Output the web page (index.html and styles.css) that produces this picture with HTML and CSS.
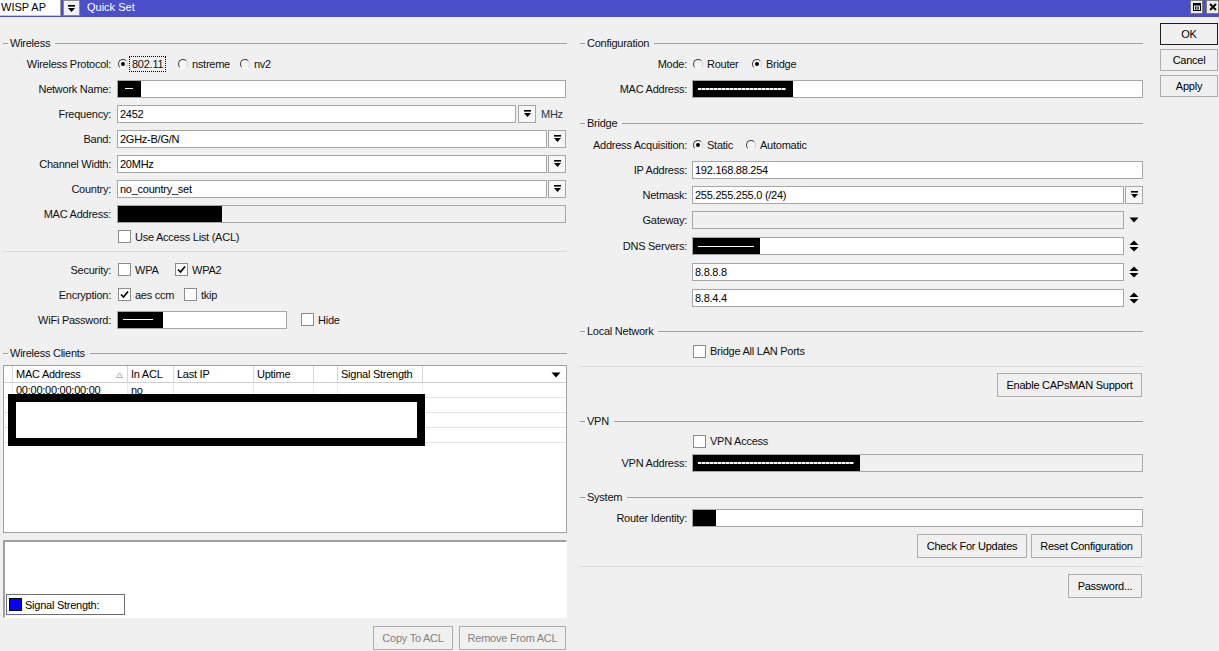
FILE: index.html
```html
<!DOCTYPE html>
<html>
<head>
<meta charset="utf-8">
<title>Quick Set</title>
<link rel="stylesheet" href="styles.css">
</head>
<body>
<div class="titlebar">
  <div class="preset">WISP AP</div>
  <div class="tb-dd"><svg width="9" height="9" viewBox="0 0 9 9"><rect x="1" y="1" width="7" height="1.6" fill="#000"/><path d="M1 4 H8 L4.5 8 Z" fill="#000"/></svg></div>
  <div class="title">Quick Set</div>
  <div class="spacer"></div>
  <div class="winbtn"><svg width="10" height="10" viewBox="0 0 10 10"><rect x="1.5" y="1.5" width="7" height="7" fill="none" stroke="#000"/><rect x="1.5" y="1.5" width="7" height="2" fill="#000"/><rect x="3.5" y="5" width="3" height="2" fill="none" stroke="#000" stroke-width="0.8"/></svg></div>
  <div class="winbtn close"><svg width="10" height="10" viewBox="0 0 10 10"><path d="M2 2 L8 8 M8 2 L2 8" stroke="#000" stroke-width="1.8"/></svg></div>
</div>

<div class="main">
  <!-- LEFT PANEL -->
  <div class="left">
    <div class="group"><span>Wireless</span></div>
    <div class="row first">
      <div class="lbl">Wireless Protocol:</div>
      <div class="opts">
        <div class="opt w60"><span class="rb on"></span><span class="focus">802.11</span></div>
        <div class="opt w62"><span class="rb"></span><span>nstreme</span></div>
        <div class="opt"><span class="rb"></span><span>nv2</span></div>
      </div>
    </div>
    <div class="row">
      <div class="lbl">Network Name:</div>
      <div class="field"><span class="redact w24"><span class="dash d8"></span></span></div>
    </div>
    <div class="row">
      <div class="lbl">Frequency:</div>
      <div class="field">2452</div>
      <div class="ddbtn gap2"><svg width="9" height="9" viewBox="0 0 9 9"><rect x="1" y="1" width="7" height="1.6" fill="#000"/><path d="M1 4 H8 L4.5 8 Z" fill="#000"/></svg></div>
      <div class="unit">MHz</div>
    </div>
    <div class="row">
      <div class="lbl">Band:</div>
      <div class="field">2GHz-B/G/N</div>
      <div class="ddbtn"><svg width="9" height="9" viewBox="0 0 9 9"><rect x="1" y="1" width="7" height="1.6" fill="#000"/><path d="M1 4 H8 L4.5 8 Z" fill="#000"/></svg></div>
    </div>
    <div class="row">
      <div class="lbl">Channel Width:</div>
      <div class="field">20MHz</div>
      <div class="ddbtn"><svg width="9" height="9" viewBox="0 0 9 9"><rect x="1" y="1" width="7" height="1.6" fill="#000"/><path d="M1 4 H8 L4.5 8 Z" fill="#000"/></svg></div>
    </div>
    <div class="row">
      <div class="lbl">Country:</div>
      <div class="field">no_country_set</div>
      <div class="ddbtn"><svg width="9" height="9" viewBox="0 0 9 9"><rect x="1" y="1" width="7" height="1.6" fill="#000"/><path d="M1 4 H8 L4.5 8 Z" fill="#000"/></svg></div>
    </div>
    <div class="row">
      <div class="lbl">MAC Address:</div>
      <div class="field dis"><span class="redact w105"></span></div>
    </div>
    <div class="row acl">
      <div class="lbl"></div>
      <div class="opts">
        <div class="opt"><span class="cb"></span><span>Use Access List (ACL)</span></div>
      </div>
    </div>
    <div class="sep s4"></div>
    <div class="row mt5">
      <div class="lbl">Security:</div>
      <div class="opts">
        <div class="opt w57"><span class="cb"></span><span>WPA</span></div>
        <div class="opt"><span class="cb on"><svg width="11" height="11" viewBox="0 0 11 11"><path d="M2 5.5 L4.5 8 L9 2.5" fill="none" stroke="#000" stroke-width="1.7"/></svg></span><span>WPA2</span></div>
      </div>
    </div>
    <div class="row">
      <div class="lbl">Encryption:</div>
      <div class="opts">
        <div class="opt w66"><span class="cb on"><svg width="11" height="11" viewBox="0 0 11 11"><path d="M2 5.5 L4.5 8 L9 2.5" fill="none" stroke="#000" stroke-width="1.7"/></svg></span><span>aes ccm</span></div>
        <div class="opt"><span class="cb"></span><span>tkip</span></div>
      </div>
    </div>
    <div class="row">
      <div class="lbl">WiFi Password:</div>
      <div class="field fixed170"><span class="redact w46"><span class="dash d30"></span></span></div>
      <div class="opts ml14">
        <div class="opt"><span class="cb"></span><span>Hide</span></div>
      </div>
    </div>

    <div class="group mt14"><span>Wireless Clients</span></div>
    <div class="table">
      <div class="trow thead">
        <div class="td"></div>
        <div class="td sorted">MAC Address<svg class="sort" width="7" height="6" viewBox="0 0 7 6"><path d="M0.5 5.5 L3.5 0.8 L6.5 5.5 Z" fill="none" stroke="#b0b0b0"/></svg></div>
        <div class="td">In ACL</div>
        <div class="td">Last IP</div>
        <div class="td">Uptime</div>
        <div class="td"></div>
        <div class="td">Signal Strength</div>
        <div class="td last"><svg class="hdd" width="10" height="6" viewBox="0 0 10 6"><path d="M0.5 0.5 H9.5 L5 5.5 Z" fill="#000"/></svg></div>
      </div>
      <div class="trow">
        <div class="td"></div>
        <div class="td">00:00:00:00:00:00</div>
        <div class="td">no</div>
        <div class="td"></div><div class="td"></div><div class="td"></div><div class="td"></div><div class="td last"></div>
      </div>
      <div class="trow">
        <div class="td"></div><div class="td"></div><div class="td"></div><div class="td"></div><div class="td"></div><div class="td"></div><div class="td"></div><div class="td last"></div>
      </div>
      <div class="trow">
        <div class="td"></div><div class="td"></div><div class="td"></div><div class="td"></div><div class="td"></div><div class="td"></div><div class="td"></div><div class="td last"></div>
      </div>
      <div class="trow">
        <div class="td"></div><div class="td"></div><div class="td"></div><div class="td"></div><div class="td"></div><div class="td"></div><div class="td"></div><div class="td last"></div>
      </div>
      <div class="table-redact"></div>
    </div>

    <div class="chart">
      <div class="legend"><span class="swatch"></span><span>Signal Strength:</span></div>
    </div>

    <div class="btnrow mt8">
      <div class="btn disabled w80">Copy To ACL</div>
      <div class="btn disabled w107">Remove From ACL</div>
    </div>
  </div>

  <!-- RIGHT PANEL -->
  <div class="right">
    <div class="group"><span>Configuration</span></div>
    <div class="row first">
      <div class="lbl">Mode:</div>
      <div class="opts">
        <div class="opt w59"><span class="rb"></span><span>Router</span></div>
        <div class="opt"><span class="rb on"></span><span>Bridge</span></div>
      </div>
    </div>
    <div class="row">
      <div class="lbl">MAC Address:</div>
      <div class="field"><span class="redact w101"><span class="dash dotted d88"></span></span></div>
    </div>

    <div class="group mt15"><span>Bridge</span></div>
    <div class="row mt2">
      <div class="lbl">Address Acquisition:</div>
      <div class="opts">
        <div class="opt w53"><span class="rb on"></span><span>Static</span></div>
        <div class="opt"><span class="rb"></span><span>Automatic</span></div>
      </div>
    </div>
    <div class="row">
      <div class="lbl">IP Address:</div>
      <div class="field">192.168.88.254</div>
    </div>
    <div class="row">
      <div class="lbl">Netmask:</div>
      <div class="field">255.255.255.0 (/24)</div>
      <div class="ddbtn"><svg width="9" height="9" viewBox="0 0 9 9"><rect x="1" y="1" width="7" height="1.6" fill="#000"/><path d="M1 4 H8 L4.5 8 Z" fill="#000"/></svg></div>
    </div>
    <div class="row tall">
      <div class="lbl">Gateway:</div>
      <div class="field dis"></div>
      <div class="arrowbox"><svg width="10" height="6" viewBox="0 0 10 6"><path d="M0.5 0.5 H9.5 L5 5.5 Z" fill="#000"/></svg></div>
    </div>
    <div class="row tall">
      <div class="lbl">DNS Servers:</div>
      <div class="field"><span class="redact w68"><span class="dash d56"></span></span></div>
      <div class="arrowbox"><svg width="10" height="12" viewBox="0 0 10 12"><path d="M0.5 5 H9.5 L5 0.5 Z M0.5 7 H9.5 L5 11.5 Z" fill="#000"/></svg></div>
    </div>
    <div class="row tall">
      <div class="lbl"></div>
      <div class="field">8.8.8.8</div>
      <div class="arrowbox"><svg width="10" height="12" viewBox="0 0 10 12"><path d="M0.5 5 H9.5 L5 0.5 Z M0.5 7 H9.5 L5 11.5 Z" fill="#000"/></svg></div>
    </div>
    <div class="row tall">
      <div class="lbl"></div>
      <div class="field">8.8.4.4</div>
      <div class="arrowbox"><svg width="10" height="12" viewBox="0 0 10 12"><path d="M0.5 5 H9.5 L5 0.5 Z M0.5 7 H9.5 L5 11.5 Z" fill="#000"/></svg></div>
    </div>

    <div class="group mt13"><span>Local Network</span></div>
    <div class="row short mt2">
      <div class="lbl"></div>
      <div class="opts">
        <div class="opt"><span class="cb"></span><span>Bridge All LAN Ports</span></div>
      </div>
    </div>
    <div class="sep s4"></div>
    <div class="btnrow mt6">
      <div class="btn w145">Enable CAPsMAN Support</div>
    </div>

    <div class="group mt17"><span>VPN</span></div>
    <div class="row short mt2">
      <div class="lbl"></div>
      <div class="opts">
        <div class="opt"><span class="cb"></span><span>VPN Access</span></div>
      </div>
    </div>
    <div class="row short">
      <div class="lbl">VPN Address:</div>
      <div class="field dis"><span class="redact w168"><span class="dash dotted d156"></span></span></div>
    </div>

    <div class="group mt16"><span>System</span></div>
    <div class="row mid mt2">
      <div class="lbl">Router Identity:</div>
      <div class="field"><span class="redact w24"></span></div>
    </div>
    <div class="btnrow mt4">
      <div class="btn w110">Check For Updates</div>
      <div class="btn w111">Reset Configuration</div>
    </div>
    <div class="sep s8"></div>
    <div class="btnrow mt7">
      <div class="btn w74">Password...</div>
    </div>
  </div>

  <!-- ACTIONS -->
  <div class="actions">
    <div class="btn default">OK</div>
    <div class="btn">Cancel</div>
    <div class="btn">Apply</div>
  </div>
</div>
</body>
</html>
```

FILE: styles.css
```css
* { box-sizing: border-box; }

body {
  margin: 0;
  width: 1219px;
  height: 651px;
  overflow: hidden;
  background: #f0f0f0;
  font-family: "Liberation Sans", Arial, sans-serif;
  font-size: 11px;
  letter-spacing: -0.25px;
  color: #111;
}

/* ---------- title bar ---------- */
.titlebar {
  height: 17px;
  background: #4b50c8;
  display: flex;
  align-items: flex-start;
}
.preset {
  width: 61px;
  height: 16px;
  background: #fff;
  border-right: 1px solid #9a9a9a;
  border-bottom: 1px solid #c8c8c8;
  padding-left: 1px;
  line-height: 15px;
  letter-spacing: 0;
  color: #000;
}
.tb-dd {
  width: 17px;
  height: 16px;
  margin-left: 2px;
  background: #f0f0f0;
  border: 1px solid #8a8a8a;
  display: flex;
  align-items: center;
  justify-content: center;
}
.title {
  color: #fff;
  margin-left: 7px;
  line-height: 15px;
  letter-spacing: 0;
}
.spacer { flex: 1; }
.winbtn {
  width: 13px;
  height: 14px;
  margin-right: 3px;
  background: #ececec;
  border: 1px solid #7a7a7a;
  display: flex;
  align-items: center;
  justify-content: center;
}
.winbtn.close { margin-right: 0; }

/* ---------- main layout ---------- */
.main {
  display: flex;
  padding-top: 6px;
}
.left {
  width: 570px;
  padding: 13px 3px 0 3px;
}
.right {
  width: 567px;
  margin-left: 8px;
  padding: 13px 2px 0 2px;
}
.actions {
  width: 58px;
  margin-left: 15px;
  display: flex;
  flex-direction: column;
  gap: 4px;
}
.actions .btn { height: 22px; }

/* ---------- group headers ---------- */
.group {
  display: flex;
  align-items: center;
  height: 14px;
  white-space: nowrap;
}
.group::before {
  content: "";
  width: 5px;
  border-top: 1px solid #a0a0a0;
  margin-right: 2px;
}
.group::after {
  content: "";
  flex: 1;
  border-top: 1px solid #a0a0a0;
  margin-left: 5px;
}

.sep { border-top: 1px solid #dadada; height: 0; }
.s4 { margin-top: 4px; }
.s8 { margin-top: 8px; }

.mt2 { margin-top: 2px; }
.mt4 { margin-top: 4px; }
.mt5 { margin-top: 5px; }
.mt6 { margin-top: 6px; }
.mt7 { margin-top: 7px; }
.mt8 { margin-top: 8px; }
.mt13 { margin-top: 13px; }
.mt14 { margin-top: 14px; }
.mt15 { margin-top: 15px; }
.mt16 { margin-top: 16px; }
.mt17 { margin-top: 17px; }

/* ---------- form rows ---------- */
.row {
  display: flex;
  align-items: center;
  height: 25px;
}
.row.first { margin-top: 1px; }
.row.acl { height: 21px; }
.row.short { height: 22px; }
.row.mid { height: 24px; }
.row.tall { height: 26px; }
.left .row { padding-right: 1px; }

.lbl {
  flex: none;
  text-align: right;
  white-space: nowrap;
}
.left .lbl { width: 114px; padding-right: 6px; }
.right .lbl { width: 112px; padding-right: 5px; }

.field {
  flex: 1;
  height: 18px;
  background: #fff;
  border: 1px solid #a6a6a6;
  display: flex;
  align-items: center;
  padding-left: 2px;
  overflow: hidden;
  white-space: nowrap;
  color: #000;
}
.field.dis { background: #f0f0f0; }
.field.fixed170 { flex: none; width: 170px; }

.redact {
  align-self: stretch;
  background: #000;
  margin: -1px 0 -1px -3px;
  height: 18px;
  display: flex;
  align-items: center;
  padding-left: 6px;
}
.w24 { width: 24px; }
.w46 { width: 46px; }
.w68 { width: 68px; }
.w101 { width: 101px; }
.w105 { width: 105px; }
.w168 { width: 168px; }

.dash { height: 1px; background: #fff; }
.dash.dotted {
  height: 2px;
  background: repeating-linear-gradient(90deg, #fff 0 3px, #888 3px 4px);
}
.d8 { width: 8px; margin-left: 2px; }
.d30 { width: 30px; }
.d56 { width: 56px; }
.d88 { width: 88px; }
.d156 { width: 156px; }

.ddbtn {
  flex: none;
  width: 18px;
  height: 18px;
  margin-left: 1px;
  background: #f7f7f7;
  border: 1px solid #a6a6a6;
  display: flex;
  align-items: center;
  justify-content: center;
}
.ddbtn.gap2 { margin-left: 2px; }
.unit {
  flex: none;
  width: 25px;
  margin-left: 5px;
  color: #1d3550;
}
.arrowbox {
  flex: none;
  width: 19px;
  display: flex;
  align-items: center;
  justify-content: center;
}

/* ---------- radios & checkboxes ---------- */
.opts {
  display: flex;
  align-items: center;
  padding-left: 1px;
}
.opts.ml14 { margin-left: 14px; padding-left: 0; }
.opt {
  display: flex;
  align-items: center;
  white-space: nowrap;
}
.w53 { width: 53px; }
.w57 { width: 57px; }
.w59 { width: 59px; }
.w60 { width: 60px; }
.w62 { width: 62px; }
.w66 { width: 66px; }

.rb {
  width: 10px;
  height: 10px;
  border-radius: 50%;
  border: 1px solid;
  border-color: #3c3c3c #cfcfcf #ffffff #3c3c3c;
  background: #f4f4f4;
  margin-right: 4px;
  display: flex;
  align-items: center;
  justify-content: center;
}
.rb.on::after {
  content: "";
  width: 4px;
  height: 4px;
  border-radius: 50%;
  background: #000;
}
.focus {
  outline: 1px dotted #000;
  outline-offset: 1px;
  margin-left: -1px;
  padding: 0 1px;
}

.cb {
  width: 13px;
  height: 13px;
  border: 1px solid #8c8c8c;
  background: #fff;
  margin-right: 4px;
  display: flex;
  align-items: center;
  justify-content: center;
}

/* ---------- clients table ---------- */
.table {
  position: relative;
  margin-top: 5px;
  height: 168px;
  background: #fff;
  border: 1px solid #a0a0a0;
}
.trow {
  display: grid;
  grid-template-columns: 9px 115px 46px 80px 60px 24px 85px 1fr;
  height: 15px;
  border-bottom: 1px solid #e4e4e4;
}
.trow.thead {
  height: 17px;
  border-bottom: 1px solid #d0d0d0;
}
.td {
  border-right: 1px solid #ececec;
  padding-left: 3px;
  line-height: 14px;
  white-space: nowrap;
  overflow: hidden;
  color: #000;
}
.thead .td {
  border-right: 1px solid #d8d8d8;
  line-height: 16px;
  position: relative;
}
.td.last { border-right: none; }
.sort { position: absolute; right: 4px; top: 6px; }
.hdd { position: absolute; right: 5px; top: 6px; }
.table-redact {
  position: absolute;
  left: 4px;
  top: 28px;
  width: 417px;
  height: 52px;
  border: 8px solid #000;
  background: #fff;
}

/* ---------- chart ---------- */
.chart {
  margin-top: 7px;
  height: 78px;
  background: #fff;
  border-style: solid;
  border-width: 2px 1px 1px 2px;
  border-color: #a0a0a0 #ffffff #ffffff #a0a0a0;
  display: flex;
  align-items: flex-end;
  padding: 0 0 2px 1px;
}
.legend {
  width: 119px;
  height: 21px;
  border: 1px solid #6e6e6e;
  background: #fff;
  display: flex;
  align-items: center;
  padding-left: 2px;
  color: #000;
}
.swatch {
  width: 13px;
  height: 13px;
  background: #0000ff;
  border: 1px solid #000;
  margin-right: 3px;
}

/* ---------- buttons ---------- */
.btnrow {
  display: flex;
  justify-content: flex-end;
  gap: 4px;
}
.left .btnrow { gap: 6px; padding-right: 1px; }
.right .btnrow { padding-right: 1px; }
.btn {
  height: 24px;
  background: #f0f0f0;
  border: 1px solid #adadad;
  display: flex;
  align-items: center;
  justify-content: center;
  white-space: nowrap;
  color: #000;
}
.btn.disabled { color: #838383; }
.btn.default { border: 1px solid #1e1e1e; }
.w74 { width: 74px; }
.w80 { width: 80px; }
.w107 { width: 107px; }
.w110 { width: 110px; }
.w111 { width: 111px; }
.w145 { width: 145px; }
```
